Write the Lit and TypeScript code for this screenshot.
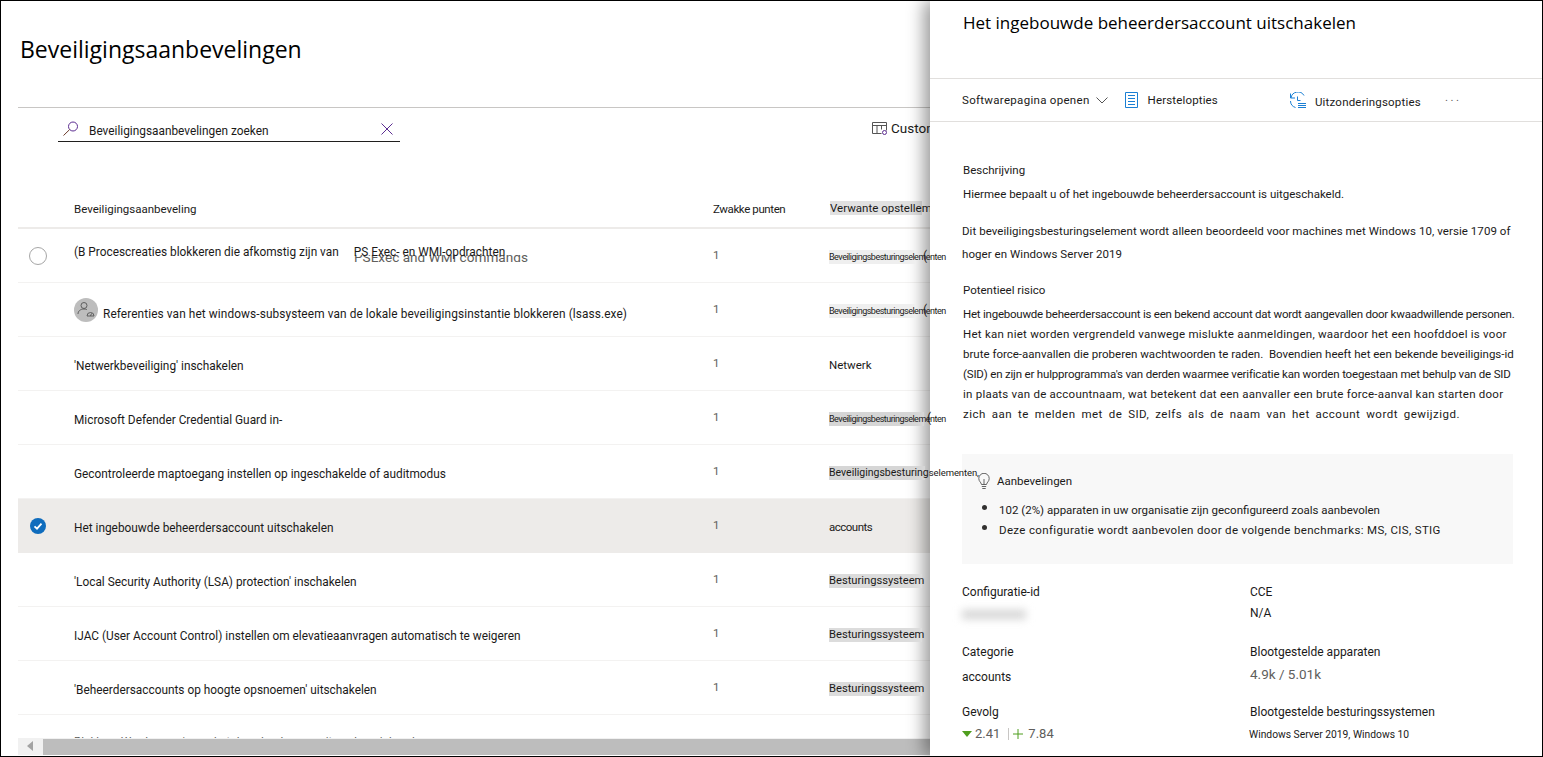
import { LitElement, css, html } from "lit";
import { customElement } from "lit/decorators.js";

type Row = {
  title: string;
  kind: "sec" | "sec-dark" | "sec-long" | "os" | "plain" | "acc";
  cat: string;
};

const ROWS: Row[] = [
  { title: "", kind: "sec", cat: "Beveiligingsbesturingselementen" },
  { title: "", kind: "sec", cat: "Beveiligingsbesturingselementen" },
  { title: "'Netwerkbeveiliging' inschakelen", kind: "plain", cat: "Netwerk" },
  { title: "Microsoft Defender Credential Guard in-", kind: "sec-dark", cat: "Beveiligingsbesturingselementen" },
  { title: "Gecontroleerde maptoegang instellen op ingeschakelde of auditmodus", kind: "sec-long", cat: "Beveiligingsbesturing" },
  { title: "Het ingebouwde beheerdersaccount uitschakelen", kind: "acc", cat: "accounts" },
  { title: "'Local Security Authority (LSA) protection' inschakelen", kind: "os", cat: "Besturingssysteem" },
  { title: "IJAC (User Account Control) instellen om elevatieaanvragen automatisch te weigeren", kind: "os", cat: "Besturingssysteem" },
  { title: "'Beheerdersaccounts op hoogte opsnoemen' uitschakelen", kind: "os", cat: "Besturingssysteem" },
];

// the source lines are unevenly spaced, so each one carries its own tracking
const RISK_LINES: [string, number, number][] = [
  ["Het ingebouwde beheerdersaccount is een bekend account dat wordt aangevallen door kwaadwillende personen.", -0.23, 0],
  ["Het kan niet worden vergrendeld vanwege mislukte aanmeldingen, waardoor het een hoofddoel is voor", 0.24, 0],
  ["brute force-aanvallen die proberen wachtwoorden te raden.  Bovendien heeft het een bekende beveiligings-id", 0, 0],
  ["(SID) en zijn er hulpprogramma's van derden waarmee verificatie kan worden toegestaan met behulp van de SID", -0.18, 0],
  ["in plaats van de accountnaam, wat betekent dat een aanvaller een brute force-aanval kan starten door", 0.23, 0],
  ["zich aan te melden met de SID, zelfs als de naam van het account wordt gewijzigd.", 0.5, 2.5],
];

const searchIcon = html`<svg width="18" height="18" viewBox="0 0 18 18" fill="none" stroke="#5c2d91"><circle cx="11" cy="6.500" r="4.500"/><path d="M7.600 9.600 1.500 15.500" stroke="#6b3a2a"/></svg>`;
const closeIcon = html`<svg width="14" height="14" viewBox="0 0 14 14" fill="none" stroke="#5c2d91"><path d="M1.500 1.500 12.500 12.500M12.500 1.500 1.500 12.500"/></svg>`;
const columnsIcon = html`<svg width="16" height="15" viewBox="0 0 16 15" fill="none" stroke="#555"><path d="M.5 1.500h14v8M.5 1.500v11h9M.5 4.500h14M5 4.500v8M9.500 4.500v4" /><circle cx="12.500" cy="11.500" r="2" stroke="#5c2d91"/></svg>`;
const chevron = html`<svg width="12" height="7" viewBox="0 0 12 7" fill="none" stroke="#555"><path d="M.5.5 6 6l5.500-5.500"/></svg>`;
const listIcon = html`<svg width="13" height="16" viewBox="0 0 13 16" fill="none" stroke="#1a7fd4"><path d="M.5.5h12v15H.5zM3 3.500h7M3 6.500h7M3 9.500h7M3 12.500h7"/></svg>`;
const historyIcon = html`<svg width="18" height="17" viewBox="0 0 18 17" fill="none" stroke="#1a7fd4"><path d="M2 6a7 7 0 0 1 13-2.500M1.500 1.500V6H6M1.500 9a7 7 0 0 0 5 6.500M8.500 4.500v4h3M9 11.500h8M9 13.500h8M9 15.500h8"/></svg>`;
const bulbIcon = html`<svg width="12" height="17" viewBox="0 0 12 17" fill="none" stroke="#555" stroke-width=".9"><path d="M3.500 11.500C3 9 .8 8.500.8 5.500a5.200 5.200 0 0 1 10.400 0c0 3-2.200 3.500-2.700 6zM6 11.500V6M3.800 13.500h4.400M4.300 15.500h3.400"/></svg>`;
const personIcon = html`<svg width="18" height="18" viewBox="0 0 18 18" fill="none" stroke="#555" stroke-width=".9"><circle cx="7" cy="4.500" r="3"/><path d="M1 13c0-3 2.500-5 6-5 1 0 2 .2 2.800.6"/><path d="M10 15a3.500 3.500 0 1 1 7 0zM13.500 15l1-2.500" /></svg>`;
const checkIcon = html`<svg width="16" height="16" viewBox="0 0 16 16"><circle cx="8" cy="8" r="8" fill="#0f6cbd"/><path d="M4.500 8.300 7 10.700l4.500-5" fill="none" stroke="#fff" stroke-width="1.800"/></svg>`;
const arrowDown = html`<svg width="10" height="6" viewBox="0 0 10 6"><path d="M0 0h10L5 6z" fill="#4f9e1e"/></svg>`;
const plusIcon = html`<svg width="10" height="10" viewBox="0 0 10 10" stroke="#4f9e1e"><path d="M5 0v10M0 5h10"/></svg>`;

@customElement("app-root")
export class AppRoot extends LitElement {
  static styles = css`
    :host {
      display: block;
      position: relative;
      box-sizing: border-box;
      width: 1543px;
      height: 757px;
      overflow: hidden;
      background: #fff;
      border: 1px solid #000;
      font-family: Roboto, "Liberation Sans", sans-serif;
      font-size: 11.500px;
      color: #1b1a19;
    }

    .main {
      margin-left: 17px;
      height: 755px;
      display: flex;
      flex-direction: column;
      overflow: hidden;
    }
    h1 {
      margin: 0;
      padding: 33px 0 0 2px;
      height: 107px;
      flex: none;
      box-sizing: border-box;
      border-bottom: 1px solid #c8c6c4;
      font-family: "Open Sans", sans-serif;
      font-size: 23px;
      font-weight: 400;
      line-height: 30px;
      color: #000;
      white-space: nowrap;
    }

    .commands {
      display: flex;
      align-items: flex-start;
      height: 82px;
      flex: none;
      padding-top: 9px;
      box-sizing: border-box;
    }
    .search {
      margin-left: 40px;
      width: 342px;
      height: 25px;
      box-sizing: border-box;
      border-bottom: 1px solid #201f1e;
      display: flex;
      align-items: center;
      padding: 0 6px 0 4px;
      gap: 9px;
      font-size: 11.850px;
    }
    .search span { flex: 1; padding-top: 3px; }
    .customize {
      margin-left: 472px;
      display: flex;
      align-items: center;
      gap: 3px;
      height: 22px;
      font-size: 13.500px;
      white-space: nowrap;
    }

    .head, .row {
      display: grid;
      grid-template-columns: 56px 639px 117px 1fr;
      align-items: center;
      flex: none;
    }
    .head {
      height: 39px;
      border-bottom: 2px solid #edebe9;
      box-sizing: border-box;
    }
    .head .title { padding-top: 0; font-size: 11.500px; }
    .head .title.narrow { letter-spacing: -0.4px; }
    .head .mark {
      background: linear-gradient(#e1e1e1, #e1e1e1) no-repeat 0 0 / 92px 100%;
      white-space: nowrap;
      line-height: 14px;
      margin-bottom: 2px;
    }
    .row {
      height: 54px;
      box-sizing: border-box;
      border-bottom: 1px solid #f3f2f1;
      white-space: nowrap;
    }
    .row.selected {
      background: #edebe9;
      border-bottom-color: #edebe9;
    }
    .pick { padding-left: 12px; display: flex; }
    .radio {
      width: 16px;
      height: 16px;
      border: 1px solid #a6a6a6;
      border-radius: 50%;
      margin-left: -1px;
    }
    .title { padding-top: 4px; font-size: 11.850px; }
    .title.stack {
      padding: 0;
      position: relative;
      line-height: 14px;
      margin-top: -8px;
    }
    .ghost {
      position: absolute;
      left: 280px;
      top: 10px;
      height: 8px;
      overflow: hidden;
      color: #605e5c;
      font-size: 13.600px;
      line-height: 14px;
    }
    .ghost span { position: relative; top: -5px; }
    .front { position: relative; }
    .gap { display: inline-block; width: 15px; }
    .with-icon {
      display: flex;
      align-items: center;
      gap: 5px;
      padding-top: 0;
    }
    .with-icon b {
      font-weight: 400;
      position: relative;
      top: 4px;
      letter-spacing: 0.1px;
    }
    .persona {
      width: 24px;
      height: 24px;
      border-radius: 50%;
      background: #bdbdbd;
      display: flex;
      align-items: center;
      justify-content: center;
    }
    .count { color: #605e5c; padding-bottom: 2px; }
    .cat {
      position: relative;
      z-index: 3;
      justify-self: start;
      padding-top: 3px;
      margin-left: -1px;
    }
    .cat span { display: block; line-height: 14px; position: relative; }
    .paren {
      position: absolute;
      top: -1px;
      left: 94px;
      font-style: normal;
      font-size: 12px;
      letter-spacing: 0;
    }
    .tail { font-size: 9.500px; letter-spacing: -0.1px; font-weight: 400; }
    .sec span {
      font-size: 9px;
      letter-spacing: -0.5px;
      background: linear-gradient(#efefef, #efefef) no-repeat 0 0 / 87px 100%;
    }
    .sec-dark span {
      font-size: 9px;
      letter-spacing: -0.5px;
      background: linear-gradient(#d6d6d6, #d6d6d6) no-repeat 0 0 / 95px 100%;
    }
    .sec-dark .paren { left: 98px; }
    .sec-long span {
      font-size: 10.500px;
      background: linear-gradient(#d6d6d6, #d6d6d6) no-repeat 0 0 / 96px 100%;
    }
    .os span {
      font-size: 11.200px;
      background: linear-gradient(#dcdcdc, #dcdcdc) no-repeat 0 0 / 93px 100%;
    }
    .acc span { letter-spacing: -0.5px; }

    .clipped {
      height: 23px;
      flex: none;
      overflow: hidden;
      color: #605e5c;
      padding: 19px 0 0 56px;
      box-sizing: border-box;
      white-space: nowrap;
    }
    .scrollbar {
      height: 17px;
      flex: none;
      background: #f1f1f1;
      display: flex;
    }
    .scrollbar i {
      width: 0;
      height: 0;
      margin: 3px 10px 0 9px;
      border: 5px solid transparent;
      border-left-width: 0;
      border-right: 6px solid #a3a3a3;
    }
    .scrollbar em {
      flex: 1;
      height: 16px;
      align-self: flex-end;
      background: #bdbdbd;
    }

    .panel {
      position: absolute;
      z-index: 2;
      top: 0;
      right: 0;
      bottom: 0;
      width: 612px;
      background: #fff;
      box-shadow: -6px 0 16px rgba(0, 0, 0, 0.4);
      line-height: 20px;
    }
    h2 {
      margin: 0;
      height: 78px;
      padding: 10px 0 0 33px;
      box-sizing: border-box;
      border-bottom: 1px solid #e1dfdd;
      font-family: "Open Sans", sans-serif;
      font-size: 17px;
      font-weight: 400;
      line-height: 24px;
      color: #000;
    }
    .toolbar {
      height: 43px;
      box-sizing: border-box;
      border-bottom: 1px solid #e1dfdd;
      padding-left: 32px;
      display: flex;
      align-items: center;
      white-space: nowrap;
    }
    .toolbar svg { display: block; }
    .toolbar .open { letter-spacing: 0.3px; }
    .toolbar .chev { margin-left: 6px; }
    .toolbar .b1 { margin-left: 17px; }
    .toolbar .t1 { margin-left: 10px; letter-spacing: 0.15px; }
    .toolbar .b2 { margin-left: 71px; }
    .toolbar .t2 {
      margin-left: 8px;
      position: relative;
      top: 2px;
      letter-spacing: 0.2px;
    }
    .toolbar .more {
      margin-left: 24px;
      letter-spacing: 2.500px;
      color: #605e5c;
      padding-bottom: 6px;
    }
    .body { padding: 38px 29px 0 32px; white-space: nowrap; }
    .body p { margin: 0; }
    .label { padding-left: 1px; }
    .body .desc { margin-top: 4px; }
    .body .spaced { margin-top: 16px; line-height: 23px; letter-spacing: 0.06px; }
    .body .risk { margin-top: 14px; padding-left: 1px; }
    .risk-text { margin-top: 4px; padding-left: 1px; }
    .risk-text div { height: 20px; white-space: pre; }
    .callout {
      margin-top: 30px;
      height: 110px;
      background: #f8f8f8;
      box-sizing: border-box;
      padding: 17px 0 0 16px;
    }
    .callout .top { display: flex; align-items: center; gap: 7px; }
    .callout ul { margin: 9px 0 0; padding: 0 0 0 4px; list-style: none; }
    .callout li { height: 20px; display: flex; gap: 12px; }
    .callout li::before {
      content: "";
      width: 5px;
      height: 5px;
      margin-top: 5px;
      border-radius: 50%;
      background: #323130;
    }
    .callout .wide { letter-spacing: 0.35px; }
    .facts {
      margin-top: 18px;
      display: grid;
      grid-template-columns: 288px 1fr;
      grid-auto-rows: 60px;
      font-size: 12px;
    }
    .facts .v { margin-top: 1px; }
    .facts .cat-v { margin-top: 5px; }
    .blur {
      width: 64px;
      height: 9px;
      margin-top: 8px;
      background: #d4d4d4;
      filter: blur(4px);
    }
    .facts .big { font-size: 13.500px; color: #605e5c; margin-top: 2px; }
    .facts .small { font-size: 10.300px; margin-top: 3px; margin-left: -1px; }
    .facts .impact {
      display: flex;
      align-items: center;
      gap: 3px;
      font-size: 13px;
    }
    .impact u {
      display: block;
      width: 1px;
      height: 12px;
      background: #c8c6c4;
      margin: 0 1px 0 5px;
    }
    .impact span:last-child { margin-left: 2px; }
  `;

  private titleOf(r: Row, i: number) {
    if (i === 0) {
      return html`<div class="title stack">
        <span class="ghost"><span>PSExec and WMI commands</span></span>
        <span class="front">(B Procescreaties blokkeren die afkomstig zijn van<span class="gap"></span>PS Exec- en WMI-opdrachten</span>
      </div>`;
    }
    if (i === 1) {
      return html`<div class="title with-icon">
        <span class="persona">${personIcon}</span>
        <b>Referenties van het windows-subsysteem van de lokale beveiligingsinstantie blokkeren (lsass.exe)</b>
      </div>`;
    }
    return html`<div class="title">${r.title}</div>`;
  }

  private catOf(r: Row) {
    if (r.kind === "sec" || r.kind === "sec-dark") {
      return html`<span>${r.cat}<i class="paren">(</i></span>`;
    }
    if (r.kind === "sec-long") {
      return html`<span>${r.cat}<b class="tail">selementen,</b></span>`;
    }
    return html`<span>${r.cat}</span>`;
  }

  render() {
    return html`
      <div class="main">
        <h1>Beveiligingsaanbevelingen</h1>
        <div class="commands">
          <div class="search">
            ${searchIcon}<span>Beveiligingsaanbevelingen zoeken</span>${closeIcon}
          </div>
          <div class="customize">${columnsIcon}<span>Customize columns</span></div>
        </div>
        <div class="head">
          <div></div>
          <div class="title">Beveiligingsaanbeveling</div>
          <div class="title narrow">Zwakke punten</div>
          <div><div class="mark">Verwante opstellemen</div></div>
        </div>
        ${ROWS.map(
          (r, i) => html`<div class="row ${i === 5 ? "selected" : ""}">
            <div class="pick">
              ${i === 0 ? html`<div class="radio"></div>` : ""}
              ${i === 5 ? checkIcon : ""}
            </div>
            ${this.titleOf(r, i)}
            <div class="count">1</div>
            <div class="cat ${r.kind}">${this.catOf(r)}</div>
          </div>`
        )}
        <div class="clipped">Blokkeer Word macro's van het downloaden van uitvoerbare inhoud</div>
        <div class="scrollbar"><i></i><em></em></div>
      </div>

      <aside class="panel">
        <h2>Het ingebouwde beheerdersaccount uitschakelen</h2>
        <div class="toolbar">
          <span class="open">Softwarepagina openen</span><span class="chev">${chevron}</span>
          <span class="b1">${listIcon}</span><span class="t1">Herstelopties</span>
          <span class="b2">${historyIcon}</span><span class="t2">Uitzonderingsopties</span>
          <span class="more">...</span>
        </div>
        <div class="body">
          <p class="label">Beschrijving</p>
          <p class="label desc">Hiermee bepaalt u of het ingebouwde beheerdersaccount is uitgeschakeld.</p>
          <p class="spaced">Dit beveiligingsbesturingselement wordt alleen beoordeeld voor machines met Windows 10, versie 1709 of<br />hoger en Windows Server 2019</p>
          <p class="risk">Potentieel risico</p>
          <div class="risk-text">
            ${RISK_LINES.map(
              ([t, ls, ws]) => html`<div style="letter-spacing:${ls}px;word-spacing:${ws}px">${t}</div>`
            )}
          </div>
          <div class="callout">
            <div class="top">${bulbIcon}<span>Aanbevelingen</span></div>
            <ul>
              <li><span>102 (2%) apparaten in uw organisatie zijn geconfigureerd zoals aanbevolen</span></li>
              <li class="wide"><span>Deze configuratie wordt aanbevolen door de volgende benchmarks: MS, CIS, STIG</span></li>
            </ul>
          </div>
          <div class="facts">
            <div>Configuratie-id<div class="blur"></div></div>
            <div>CCE<div class="v">N/A</div></div>
            <div>Categorie<div class="cat-v">accounts</div></div>
            <div>Blootgestelde apparaten<div class="big">4.9k / 5.01k</div></div>
            <div>Gevolg<div class="big impact">${arrowDown}<span>2.41</span><u></u>${plusIcon}<span>7.84</span></div></div>
            <div>Blootgestelde besturingssystemen<div class="small">Windows Server 2019, Windows 10</div></div>
          </div>
        </div>
      </aside>
    `;
  }
}
